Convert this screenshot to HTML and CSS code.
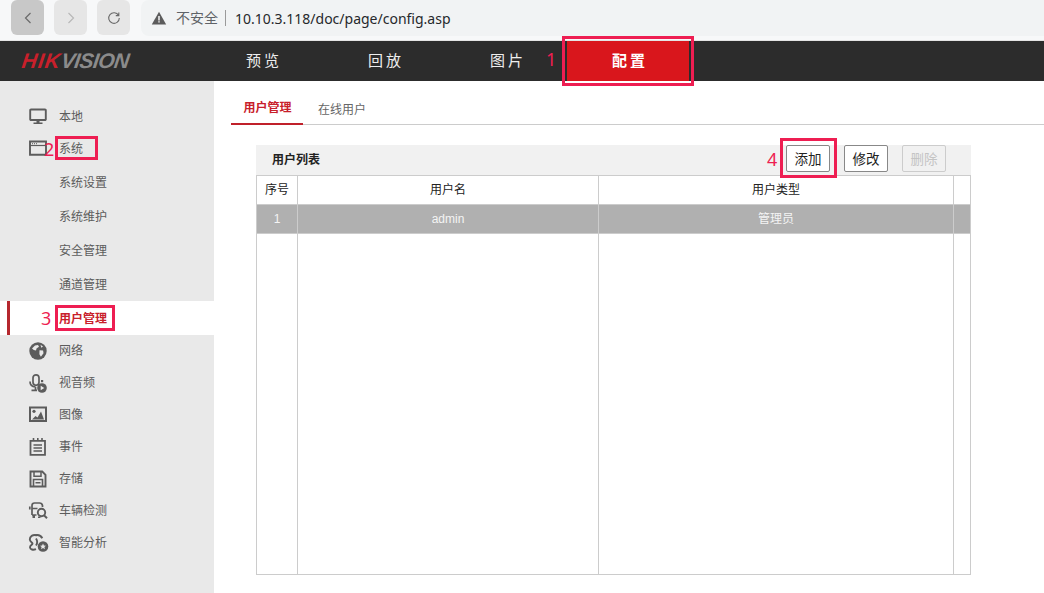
FILE: index.html
```html
<!DOCTYPE html>
<html>
<head>
<meta name="viewport" content="width=device-width, initial-scale=1">
<meta charset="utf-8">
<title>config</title>
<link rel="stylesheet" href="styles.css">
</head>
<body>

<div class="browser">
  <div class="brow-btn back"><svg width="10" height="14" viewBox="0 0 10 14"><path d="M7.5 2 2.5 7l5 5" fill="none" stroke="#6a6a6a" stroke-width="1.2"/></svg></div>
  <div class="brow-btn fwd"><svg width="10" height="14" viewBox="0 0 10 14"><path d="M2.5 2l5 5-5 5" fill="none" stroke="#b8b8b8" stroke-width="1.2"/></svg></div>
  <div class="brow-btn reload"><svg width="14" height="14" viewBox="0 0 14 14"><path d="M11.6 4.4A5.3 5.3 0 1 0 12.3 7M11.8 1.6v3h-3" fill="none" stroke="#6a6a6a" stroke-width="1.1"/></svg></div>
  <div class="address">
    <svg class="warn" width="16" height="14" viewBox="0 0 16 14"><path d="M8 .8 15.2 13.4H.8Z" fill="#5c5c5c"/><path d="M7.3 5h1.4v4.4H7.3zM7.3 10.2h1.4v1.4H7.3z" fill="#fff"/></svg>
    <span class="unsafe">不安全</span>
    <span class="url">10.10.3.118/doc/page/config.asp</span>
  </div>
</div>

<div class="topnav">
  <div class="logo"><span class="logo-text"><span class="logo-hik">HIK</span><span class="logo-vision">VISION</span></span></div>
  <a class="nav-item">预览</a>
  <a class="nav-item">回放</a>
  <a class="nav-item">图片</a>
  <a class="nav-item active">配置</a>
</div>

<div class="main">
  <div class="sidebar">
    <div class="side-row">
      <svg class="side-icon" viewBox="0 0 18 18"><path d="M2 1.500h14a.8.8 0 0 1 .8.8v8.900a.8.8 0 0 1-.8.8H2a.8.8 0 0 1-.8-.8V2.300a.8.8 0 0 1 .8-.8Z" fill="none" stroke="#5c5c5c" stroke-width="1.900"/><path d="M7.500 12h3v2.500h-3zM4.500 14.500h9v1.500h-9z" fill="#5c5c5c"/></svg>
      <span>本地</span>
    </div>
    <div class="side-row">
      <svg class="side-icon" viewBox="0 0 18 18"><path d="M1 1.500h16v13.300H1z" fill="none" stroke="#5c5c5c" stroke-width="1.900"/><path d="M1 5.500h16" stroke="#5c5c5c" stroke-width="1.200"/><path d="M3 3.700h6" stroke="#5c5c5c" stroke-width="1" stroke-dasharray="1 1"/></svg>
      <span>系统</span>
    </div>
    <div class="sub-row first">系统设置</div>
    <div class="sub-row">系统维护</div>
    <div class="sub-row">安全管理</div>
    <div class="sub-row">通道管理</div>
    <div class="sub-row current">用户管理</div>
    <div class="side-row">
      <svg class="side-icon" viewBox="0 0 18 18"><circle cx="9" cy="9" r="8.700" fill="#5c5c5c"/><path d="M3 6.500 6 3.600l3-.6 1 1.800-2.500 1.600-.5 2-2.200-.4ZM10.500 8.200l3.600.3.400 2.800-2.600 3.400-1.500-2.500ZM11.500 2.800l2.500 1.700-1.700 1.200Z" fill="#e9e9e9"/></svg>
      <span>网络</span>
    </div>
    <div class="side-row">
      <svg class="side-icon" viewBox="0 0 18 18"><rect x="4" y="0.800" width="6" height="10.500" rx="3" fill="none" stroke="#5c5c5c" stroke-width="1.700"/><path d="M1 7.500c0 3.600 2.300 5.300 5.500 5.300M6.500 13v3M2.500 16.300h5.500" fill="none" stroke="#5c5c5c" stroke-width="1.700"/><circle cx="13" cy="14" r="4.800" fill="#5c5c5c"/><path d="M11.700 11.800 15.300 14 11.700 16.200Z" fill="#e9e9e9"/><rect x="12" y="6" width="2.200" height="2.200" fill="#5c5c5c"/></svg>
      <span>视音频</span>
    </div>
    <div class="side-row">
      <svg class="side-icon" viewBox="0 0 18 18"><path d="M1 1.500h16v13.500H1z" fill="none" stroke="#5c5c5c" stroke-width="2"/><circle cx="5" cy="5.300" r="1.600" fill="#5c5c5c"/><path d="M3 13.500l3.500-3.500 2 1.500 3.500-6 3 8Z" fill="#5c5c5c"/></svg>
      <span>图像</span>
    </div>
    <div class="side-row">
      <svg class="side-icon" viewBox="0 0 18 18"><path d="M1.500 2.800h14.500v14H1.500z" fill="none" stroke="#5c5c5c" stroke-width="1.800"/><path d="M4.500 0v3M8.800 0v3M13 0v3M4.500 7h8.500M4.500 10h8.500M4.500 13h8.500" stroke="#5c5c5c" stroke-width="1.600"/></svg>
      <span>事件</span>
    </div>
    <div class="side-row">
      <svg class="side-icon" viewBox="0 0 18 18"><path d="M1.500 1.500h11.700l3.300 3.300v11.700H1.500z" fill="none" stroke="#5c5c5c" stroke-width="1.900"/><path d="M5 2v4.300h7V2" fill="none" stroke="#5c5c5c" stroke-width="1.500"/><path d="M4.500 16V9.500h9V16M6.500 12.700h5" fill="none" stroke="#5c5c5c" stroke-width="1.600"/></svg>
      <span>存储</span>
    </div>
    <div class="side-row">
      <svg class="side-icon" viewBox="0 0 18 18"><path d="M3 13V3.500Q3 1 5.500 1h5q2.500 0 3 2.500v1.500M3 6.500h5.500M3 13h4.500M.8 4.500v3" fill="none" stroke="#5c5c5c" stroke-width="1.700"/><path d="M3.500 13h2.500v3H3.500zM9 14.500h2.500v1.500H9z" fill="#5c5c5c"/><circle cx="12.500" cy="10.500" r="3.700" fill="none" stroke="#5c5c5c" stroke-width="1.900"/><path d="m15 13.300 3 3" stroke="#5c5c5c" stroke-width="2"/></svg>
      <span>车辆检测</span>
    </div>
    <div class="side-row">
      <svg class="side-icon" viewBox="0 0 18 18"><path d="M8 1.300C3.500.3.700 2.500.8 5.500 1 8 3.500 8.200 3.500 9.500 3.500 11 .8 11.300 1 13.500c.2 2 3 2.800 6 1.700M6.500 1.300c3-.7 5.500.5 6.800 3M7 4.500c1.800 2.800 1.800 4.500 0 7" fill="none" stroke="#5c5c5c" stroke-width="1.900"/><circle cx="14" cy="12.500" r="5.300" fill="#5c5c5c"/><path d="m14 9.500.9 2 2.100.2-1.600 1.400.5 2.100-1.900-1.100-1.900 1.100.5-2.100-1.600-1.400 2.100-.2Z" fill="#e9e9e9"/></svg>
      <span>智能分析</span>
    </div>
  </div>

  <div class="content">
    <div class="tabs">
      <a class="tab on">用户管理</a>
      <a class="tab">在线用户</a>
    </div>
    <div class="panel">
      <div class="toolbar">
        <span class="toolbar-title">用户列表</span>
        <button class="btn">添加</button>
        <button class="btn">修改</button>
        <button class="btn off">删除</button>
      </div>
      <table class="user-table">
        <colgroup><col class="c-no"><col class="c-name"><col class="c-type"><col class="c-end"></colgroup>
        <tr class="head"><td>序号</td><td>用户名</td><td>用户类型</td><td></td></tr>
        <tr class="sel"><td>1</td><td>admin</td><td>管理员</td><td></td></tr>
        <tr class="rest"><td></td><td></td><td></td><td></td></tr>
      </table>
    </div>
  </div>
</div>

<!-- red markup drawn over the page -->
<div class="box box1"></div>
<div class="box box2"></div>
<div class="box box3"></div>
<div class="box box4"></div>
<span class="num num1">1</span>
<span class="num num2">2</span>
<span class="num num3">3</span>
<span class="num num4">4</span>

</body>
</html>
```

FILE: styles.css
```css
html, body {
  margin: 0;
  padding: 0;
}

body {
  position: relative;
  height: 593px;
  overflow: hidden;
  background: #fff;
  font-family: "Liberation Sans", "Noto Sans CJK SC", sans-serif;
  font-size: 12px;
  color: #333;
}

/* browser bar */
.browser {
  display: flex;
  align-items: flex-start;
  height: 40px;
  padding-left: 11px;
  background: #f7f8f9;
  border-bottom: 1px solid #e4e4e4;
}

.brow-btn {
  display: flex;
  align-items: center;
  justify-content: center;
  width: 33px;
  height: 35px;
  margin-right: 10px;
  border-radius: 6px;
  background: #e6e6e6;
}

.brow-btn.back {
  background: #c8c8c8;
}

.address {
  display: flex;
  align-items: center;
  flex: 1;
  height: 36px;
  margin-left: 1px;
  padding-left: 10px;
  border-radius: 8px 0 0 8px;
  background: #f1f3f4;
  font-family: "Noto Sans", "Noto Sans CJK SC", sans-serif;
}

.warn {
  margin-right: 9px;
}

.unsafe {
  padding-right: 7px;
  border-right: 1px solid #9a9a9a;
  font-size: 14px;
  line-height: 16px;
  color: #5f6368;
}

.url {
  margin-left: 9px;
  font-size: 14px;
  color: #26282b;
}

/* top navigation */
.topnav {
  display: flex;
  height: 40px;
  background: #2c2c2c;
}

.logo {
  width: 201px;
  padding-left: 22px;
  box-sizing: border-box;
  font-size: 21px;
  line-height: 40px;
  font-weight: bold;
  font-style: italic;
}

.logo-text {
  display: inline-block;
  transform: skewX(-8deg);
}

.logo-hik {
  color: #c8202b;
  letter-spacing: 1px;
}

.logo-vision {
  color: #8b8b8b;
  letter-spacing: -0.6px;
}

.nav-item {
  width: 122px;
  box-sizing: border-box;
  padding-left: 4px;
  font-size: 15px;
  line-height: 40px;
  letter-spacing: 3px;
  text-align: center;
  color: #eee;
}

.nav-item.active {
  background: #d9161c;
  color: #fff;
  font-weight: bold;
}

/* sidebar */
.main {
  display: flex;
  height: 512px;
}

.sidebar {
  width: 214px;
  flex-shrink: 0;
  box-sizing: border-box;
  padding-top: 19px;
  background: #e9e9e9;
  color: #5c5c5c;
}

.side-row {
  display: flex;
  align-items: center;
  height: 32px;
  padding-left: 29px;
}

.side-row span {
  padding-bottom: 2px;
}

.side-icon {
  width: 18px;
  height: 18px;
  margin: 2px 12px 0 0;
  overflow: visible;
}

.sub-row {
  height: 34px;
  padding-left: 59px;
  line-height: 36px;
}

.sub-row.first {
  margin-top: 1px;
}

.sub-row.current {
  position: relative;
  margin-bottom: -1px;
  background: #fff;
  color: #c8202b;
  font-weight: bold;
}

.sub-row.current::before {
  content: "";
  position: absolute;
  left: 7px;
  top: 0;
  bottom: 0;
  width: 3px;
  background: #b5282e;
}

/* tabs and table */
.content {
  flex: 1;
  min-width: 0;
}

.tabs {
  display: flex;
  height: 43px;
  margin-left: 17px;
  border-bottom: 1px solid #ccc;
}

.tab {
  padding-top: 21px;
  box-sizing: border-box;
  line-height: 16px;
  text-align: center;
  color: #666;
}

.tab.on {
  width: 72px;
  height: 44px;
  margin-right: 15px;
  padding: 19px 0 0 1px;
  border-bottom: 2px solid #c0202a;
  color: #c8202b;
  font-weight: bold;
}

.panel {
  width: 715px;
  margin: 20px 0 0 42px;
}

.toolbar {
  display: flex;
  align-items: flex-start;
  height: 30px;
  padding: 0 25px 0 16px;
  background: #f1f1f1;
}

.toolbar-title {
  flex: 1;
  line-height: 31px;
  font-weight: bold;
  color: #222;
}

.btn {
  width: 44px;
  height: 27px;
  margin: 0 0 0 14px;
  padding: 0 0 2px;
  border: 1px solid #888;
  border-radius: 2px;
  background: #fff;
  font: 13.500px "Liberation Sans", "Noto Sans CJK SC", sans-serif;
  color: #222;
}

.btn.off {
  border-color: #ccc;
  background: #f1f1f1;
  color: #c4c4c4;
}

.user-table {
  width: 715px;
  height: 400px;
  border-collapse: collapse;
  table-layout: fixed;
  border: 1px solid #ccc;
}

.user-table td {
  padding: 0;
  border-left: 1px solid #ccc;
  border-right: 1px solid #ccc;
  line-height: 14px;
  text-align: center;
}

.c-no { width: 41px; }
.c-name { width: 301px; }
.c-type { width: 355px; }

.head td {
  height: 28px;
  border-bottom: 1px solid #ccc;
  color: #222;
}

.sel td {
  height: 28px;
  border-bottom: 1px solid #ccc;
  background: #b0b0b0;
  color: #f4f4f4;
}

/* markup */
.box {
  position: absolute;
  box-sizing: border-box;
  border: 3px solid #ee1e52;
  pointer-events: none;
}

.box1 { left: 562px; top: 36px; width: 132px; height: 50px; }
.box2 { left: 55px; top: 136px; width: 43px; height: 24px; }
.box3 { left: 55px; top: 305px; width: 60px; height: 26px; }
.box4 { left: 780px; top: 138px; width: 57px; height: 40px; }

.num {
  position: absolute;
  font-family: "Noto Sans", sans-serif;
  font-size: 18px;
  line-height: 20px;
  color: #ee1e52;
}

.num1 { left: 546px; top: 49px; }
.num2 { left: 44px; top: 139px; }
.num3 { left: 41px; top: 308px; }
.num4 { left: 767px; top: 149px; }
```
